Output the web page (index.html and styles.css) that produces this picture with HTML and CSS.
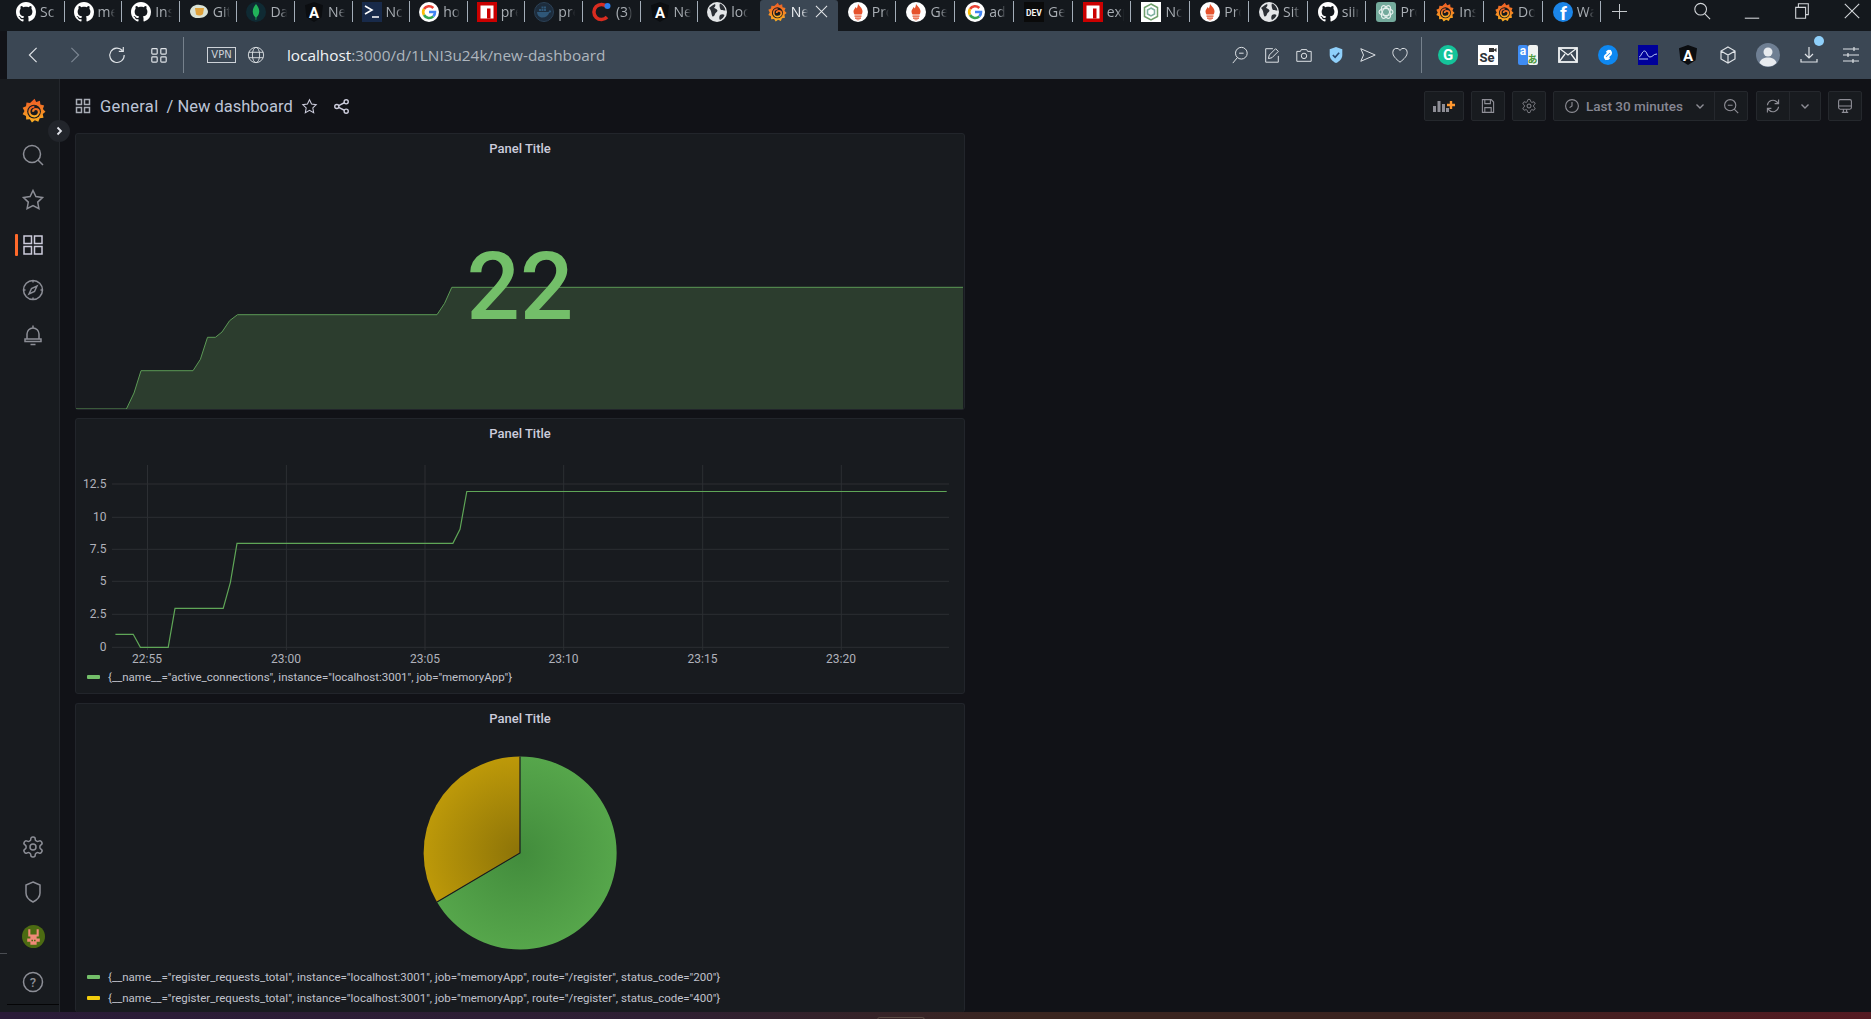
FILE: index.html
```html
<!DOCTYPE html>
<html lang="en">
<head>
  <meta charset="UTF-8" />
  <meta name="viewport" content="width=device-width, initial-scale=1.0"/>
  <title>New dashboard - Grafana</title>
  <link rel="stylesheet" href="styles.css">
</head>
<body>

  <!-- shared favicons -->
  <svg class="defs" width="0" height="0">
    <defs>
      <linearGradient id="grafGrad" x1="0" y1="1" x2="0" y2="0">
        <stop offset="0" stop-color="#fbb022"/>
        <stop offset="1" stop-color="#ee5a26"/>
      </linearGradient>
      <radialGradient id="pieGreen" gradientUnits="userSpaceOnUse" cx="520" cy="853" r="96.5">
        <stop offset="0" stop-color="#428c3c"/>
        <stop offset="1" stop-color="#56a64b"/>
      </radialGradient>
      <radialGradient id="pieYellow" gradientUnits="userSpaceOnUse" cx="520" cy="853" r="96.5">
        <stop offset="0" stop-color="#8c7308"/>
        <stop offset="1" stop-color="#bd9909"/>
      </radialGradient>
    </defs>
    <symbol id="gh" viewBox="0 0 16 16">
      <path fill="#fff" d="M8 0C3.58 0 0 3.58 0 8c0 3.54 2.29 6.53 5.47 7.59.4.07.55-.17.55-.38 0-.19-.01-.82-.01-1.49-2.01.37-2.53-.49-2.69-.94-.09-.23-.48-.94-.82-1.13-.28-.15-.68-.52-.01-.53.63-.01 1.08.58 1.23.82.72 1.21 1.87.87 2.33.66.07-.52.28-.87.51-1.07-1.78-.2-3.64-.89-3.64-3.95 0-.87.31-1.59.82-2.15-.08-.2-.36-1.02.08-2.12 0 0 .67-.21 2.2.82.64-.18 1.32-.27 2-.27.68 0 1.36.09 2 .27 1.53-1.04 2.2-.82 2.2-.82.44 1.1.16 1.92.08 2.12.51.56.82 1.27.82 2.15 0 3.07-1.87 3.75-3.65 3.95.29.25.54.73.54 1.48 0 1.07-.01 1.93-.01 2.2 0 .21.15.46.55.38A8.013 8.013 0 0016 8c0-4.42-3.58-8-8-8z"/>
    </symbol>
    <symbol id="graf" viewBox="0 0 24 24">
      <path fill="url(#grafGrad)" d="M13 .8l1.6 3 3.6-1.2.4 3.7 3.6 1-1.2 3.3 2.5 2.5-2.6 2.3.7 3.5-3.6.5-1.4 3.4-3.3-1.5-2.8 2.2-2-3-3.5.2-.2-3.5-3.2-1.7 1.7-3-1.7-3.2 3.2-1.4.5-3.5 3.4.4z"/>
      <circle cx="12.5" cy="13" r="6.6" fill="#181b1f"/>
      <path fill="none" stroke="url(#grafGrad)" stroke-width="2" d="M12.8 8.4a4.6 4.6 0 1 0 4.4 5.2c0-2-1.5-3-3-3a2.6 2.6 0 0 0-2.6 2.6"/>
    </symbol>
    <symbol id="shield" viewBox="0 0 20 20">
      <path fill="#0b0d10" d="M10 0l9 3.2-1.4 12L10 20l-7.6-4.800L1 3.200z"/>
    </symbol>
    <symbol id="google" viewBox="0 0 20 20">
      <circle cx="10" cy="10" r="10" fill="#fff"/>
      <path fill="none" stroke="#ea4335" stroke-width="2.600" d="M14.300 6A6 6 0 0 0 5 7"/>
      <path fill="none" stroke="#fbbc05" stroke-width="2.600" d="M5 7a6 6 0 0 0 0 6"/>
      <path fill="none" stroke="#34a853" stroke-width="2.600" d="M5 13a6 6 0 0 0 9.300 1.400"/>
      <path fill="none" stroke="#4285f4" stroke-width="2.600" d="M14.300 14.400A6 6 0 0 0 16 10H10"/>
    </symbol>
    <symbol id="npm" viewBox="0 0 20 20">
      <rect width="20" height="20" fill="#cb0000"/>
      <rect x="3.500" y="3.500" width="13" height="13" fill="#fff"/>
      <rect x="10" y="6.500" width="3.500" height="10" fill="#cb0000"/>
    </symbol>
    <symbol id="prom" viewBox="0 0 20 20">
      <circle cx="10" cy="10" r="10" fill="#fff"/>
      <path fill="#e6522c" d="M10 1.500c.6 2.500 4.500 4 4.500 8 0 1.200-.5 2.200-1 3h-7c-.5-.8-1-1.800-1-3 0-2 1.500-2.500 2-4.500.8.500 1 1 1.200 1.600.8-1.200 1.300-3.300 1.300-5.100z"/>
      <path fill="#e6522c" d="M6.500 13.400h7v1.400h-7zM7 15.500h6v1.300H7zM8 17.400h4c-.4 1-3.600 1-4 0z"/>
    </symbol>
    <symbol id="globe" viewBox="0 0 20 20">
      <circle cx="10" cy="10" r="10" fill="#e4e6e8"/>
      <path fill="#2a2e34" d="M2 6c2-1 3-3 6-4 1 1 0 3-1 3.500.5 1.500 3 1 3.500 3 0 2-2 1.500-2.500 3.500-.3 1.500-1.500 3-2.500 2.500C4 12 5 9 2 6zM13 1.500c3 1 5 4 5.500 7-1.500.5-3-1-4.500-.5-1-1-2-5-1-6.500zM13 13c1.500-1 3.500-1 4.500 0-.5 2-2.500 4-4.500 5-1-1-1-3.500 0-5z"/>
    </symbol>
    <symbol id="docker" viewBox="0 0 20 20">
      <circle cx="10" cy="10" r="9.500" fill="#1d2c3c" stroke="#2a4056"/>
      <path fill="#2f5778" d="M3 10h11c1 0 1.500-1 1.500-2 1 .3 1.500 1 1.700 1.800-.5.700-1.200 1-2 1-1 3-3.500 4.700-6.700 4.700-3.500 0-5.300-2.500-5.500-5.500z"/>
      <path fill="#2f5778" d="M5 7h2v2H5zM7.500 7h2v2h-2zM10 7h2v2h-2zM7.500 4.500h2v2h-2zM10 4.500h2v2h-2z"/>
    </symbol>
    <symbol id="nc" viewBox="0 0 20 20">
      <rect width="20" height="20" fill="#fff"/>
      <path fill="none" stroke="#6f9f6a" stroke-width="1.500" d="M10 2l6.500 3.500v9L10 18l-6.500-3.500v-9z"/>
      <path fill="none" stroke="#7fb0a0" stroke-width="1.500" d="M10 6l3.500 2v4L10 14l-3.500-2V8z"/>
    </symbol>
    <symbol id="openai" viewBox="0 0 20 20">
      <rect width="20" height="20" rx="3" fill="#74aa9c"/>
      <g fill="none" stroke="#e6f0ed" stroke-width="1.100">
        <ellipse cx="10" cy="10" rx="7" ry="3.500"/>
        <ellipse cx="10" cy="10" rx="7" ry="3.500" transform="rotate(60 10 10)"/>
        <ellipse cx="10" cy="10" rx="7" ry="3.500" transform="rotate(120 10 10)"/>
      </g>
    </symbol>
    <symbol id="gemoji" viewBox="0 0 20 20">
      <path fill="#d9e2d6" d="M1 9c1-5 6-7 10-6 4 0 8 3 8 7-1 5-6 6-10 6-4 .5-8-2-8-7z"/>
      <path fill="#e0a23c" d="M6 6h9l-1 6c-2 2-5 2-7 .500z"/>
    </symbol>
    <symbol id="mongo" viewBox="0 0 20 20">
      <circle cx="10" cy="10" r="10" fill="#0f2a33"/>
      <path fill="#21b35a" d="M10 2c2 2.500 3.500 5 3.200 8-.3 3-1.800 4.500-2.700 5.300l-.3 2.700h-.5l-.2-2.700C8.500 14.500 7 13 6.800 10 6.500 7 8 4.500 10 2z"/>
    </symbol>
  </svg>

  <div class="tabstrip">
    <div class="tab"><svg class="fav"><use href="#gh"/></svg><span class="tab-text">Sc</span></div>
    <div class="tab"><svg class="fav"><use href="#gh"/></svg><span class="tab-text">me</span></div>
    <div class="tab"><svg class="fav"><use href="#gh"/></svg><span class="tab-text">Ins</span></div>
    <div class="tab"><svg class="fav"><use href="#gemoji"/></svg><span class="tab-text">Git</span></div>
    <div class="tab"><svg class="fav"><use href="#mongo"/></svg><span class="tab-text">Da</span></div>
    <div class="tab">
      <svg class="fav" viewBox="0 0 20 20"><use href="#shield"/><text x="10" y="15.500" class="fav-a">A</text></svg>
      <span class="tab-text">Ne</span>
    </div>
    <div class="tab">
      <svg class="fav" viewBox="0 0 20 20"><rect width="20" height="20" fill="#182a4a"/><path d="M3 4l7 4-7 4M10 15h7" fill="none" stroke="#fff" stroke-width="1.600"/></svg>
      <span class="tab-text">Nc</span>
    </div>
    <div class="tab"><svg class="fav"><use href="#google"/></svg><span class="tab-text">ho</span></div>
    <div class="tab"><svg class="fav"><use href="#npm"/></svg><span class="tab-text">pre</span></div>
    <div class="tab"><svg class="fav"><use href="#docker"/></svg><span class="tab-text">pre</span></div>
    <div class="tab">
      <svg class="fav" viewBox="0 0 20 20"><path d="M15 5a7.500 7.500 0 1 0 0 10" fill="none" stroke="#d92c20" stroke-width="3.500"/><circle cx="15.500" cy="4" r="3" fill="#2b7de9"/></svg>
      <span class="tab-text">(3)</span>
    </div>
    <div class="tab">
      <svg class="fav" viewBox="0 0 20 20"><use href="#shield"/><text x="10" y="15.500" class="fav-a">A</text></svg>
      <span class="tab-text">Ne</span>
    </div>
    <div class="tab tab-plain"><svg class="fav"><use href="#globe"/></svg><span class="tab-text">loc</span></div>
    <div class="tab-active">
      <svg class="fav"><use href="#graf"/></svg>
      <span class="tab-text tab-text-on">Ne</span>
      <svg class="tab-close ico" viewBox="0 0 14 14"><path d="M1 1l12 12M13 1L1 13"/></svg>
    </div>
    <div class="tab tab-wide"><svg class="fav"><use href="#prom"/></svg><span class="tab-text">Pro</span></div>
    <div class="tab tab-wide"><svg class="fav"><use href="#prom"/></svg><span class="tab-text">Ge</span></div>
    <div class="tab tab-wide"><svg class="fav"><use href="#google"/></svg><span class="tab-text">ad</span></div>
    <div class="tab tab-wide">
      <svg class="fav" viewBox="0 0 20 20"><rect width="20" height="20" fill="#0a0a0a"/><text x="10" y="13.500" class="fav-dev">DEV</text></svg>
      <span class="tab-text">Ge</span>
    </div>
    <div class="tab tab-wide"><svg class="fav"><use href="#npm"/></svg><span class="tab-text">exp</span></div>
    <div class="tab tab-wide"><svg class="fav"><use href="#nc"/></svg><span class="tab-text">Nc</span></div>
    <div class="tab tab-wide"><svg class="fav"><use href="#prom"/></svg><span class="tab-text">Pro</span></div>
    <div class="tab tab-wide"><svg class="fav"><use href="#globe"/></svg><span class="tab-text">Sit</span></div>
    <div class="tab tab-wide"><svg class="fav"><use href="#gh"/></svg><span class="tab-text">siir</span></div>
    <div class="tab tab-wide"><svg class="fav"><use href="#openai"/></svg><span class="tab-text">Pro</span></div>
    <div class="tab tab-wide"><svg class="fav"><use href="#graf"/></svg><span class="tab-text">Ins</span></div>
    <div class="tab tab-wide"><svg class="fav"><use href="#graf"/></svg><span class="tab-text">Do</span></div>
    <div class="tab tab-wide">
      <svg class="fav" viewBox="0 0 20 20"><circle cx="10" cy="10" r="10" fill="#1b85e8"/><text x="10.500" y="18" class="fav-f">f</text></svg>
      <span class="tab-text">Wa</span>
    </div>
    <svg class="tab-plus ico" viewBox="0 0 16 16"><path d="M8 0v16M0 8h16"/></svg>
    <div class="win-btns">
      <div class="win-btn"><svg class="ico" viewBox="0 0 20 20"><circle cx="8.500" cy="8" r="6.500"/><path d="M13 13l6 6"/></svg></div>
      <div class="win-btn"><svg class="ico" viewBox="0 0 20 20"><path d="M2 18h16"/></svg></div>
      <div class="win-btn"><svg class="ico" viewBox="0 0 20 20"><path d="M3 6h11v12H3zM6 6V2h11v12h-3"/></svg></div>
      <div class="win-btn"><svg class="ico" viewBox="0 0 20 20"><path d="M2 2l16 16M18 2L2 18"/></svg></div>
    </div>
  </div>

  <div class="toolbar">
    <div class="tool"><svg class="ico" viewBox="0 0 20 20"><path d="M14 2l-8 8 8 8"/></svg></div>
    <div class="tool tool-off"><svg class="ico" viewBox="0 0 20 20"><path d="M6 2l8 8-8 8"/></svg></div>
    <div class="tool"><svg class="ico" viewBox="0 0 20 20"><path d="M16 5a8 8 0 1 0 2 5M17 1v5h-5"/></svg></div>
    <div class="tool"><svg class="ico" viewBox="0 0 20 20"><rect x="2" y="3" width="6" height="6" rx="1"/><rect x="12" y="3" width="6" height="6" rx="1"/><rect x="2" y="12" width="6" height="6" rx="1"/><rect x="12" y="12" width="6" height="6" rx="1"/></svg></div>
    <div class="tool-sep"></div>
    <div class="vpn">VPN</div>
    <svg class="url-globe ico" viewBox="0 0 20 20"><circle cx="10" cy="10" r="8.500"/><ellipse cx="10" cy="10" rx="4" ry="8.500"/><path d="M2 7h16M2 13h16"/></svg>
    <div class="url"><span class="url-host">localhost</span>:3000/d/1LNI3u24k/new-dashboard</div>
    <div class="tool-right">
      <div class="tool-sm"><svg class="ico" viewBox="0 0 20 20"><circle cx="11.500" cy="8" r="6.500"/><path d="M7 13l-5 6M9 8h5"/></svg></div>
      <div class="tool-sm"><svg class="ico" viewBox="0 0 20 20"><path d="M11 3H3v15h14v-7M6 14l1-4 7-7 3 3-7 7z"/></svg></div>
      <div class="tool-sm"><svg class="ico" viewBox="0 0 20 20"><path d="M2 6h4l1-2h6l1 2h4v11H2z"/><circle cx="10" cy="11" r="3"/></svg></div>
      <div class="tool-sm"><svg viewBox="0 0 20 20"><path fill="#8fd0fb" d="M10 1l7 2.500V10c0 4-3 7-7 9-4-2-7-5-7-9V3.500z"/><path d="M6.500 10l2.500 2.500 4.500-5" fill="none" stroke="#2b4a70" stroke-width="1.800"/></svg></div>
      <div class="tool-sm"><svg class="ico" viewBox="0 0 20 20"><path d="M2 3l16 7-16 7 3-7z"/></svg></div>
      <div class="tool-sm"><svg class="ico" viewBox="0 0 20 20"><path d="M10 18C5 14 2 11 2 7a4.200 4.200 0 0 1 8-2 4.200 4.200 0 0 1 8 2c0 4-3 7-8 11z"/></svg></div>
      <div class="tool-sep tool-sep-r"></div>
      <div class="ext">
        <svg viewBox="0 0 20 20"><circle cx="10" cy="10" r="10" fill="#15c39a"/><text x="10" y="15" class="ext-g">G</text></svg>
      </div>
      <div class="ext">
        <svg viewBox="0 0 20 20"><rect width="20" height="20" fill="#fff"/><text x="1.500" y="17" class="ext-se">Se</text><path d="M11 3h5v4h-5zM16 4.500l2.500-1.500v4L16 5.500z" fill="#333"/></svg>
      </div>
      <div class="ext">
        <svg viewBox="0 0 20 20"><rect width="10" height="20" rx="2" fill="#3f8cf3"/><rect x="10" width="10" height="20" rx="2" fill="#f1f3f1"/><text x="5" y="10" class="ext-a">a</text><text x="14.500" y="18" class="ext-jp">あ</text></svg>
      </div>
      <div class="ext">
        <svg viewBox="0 0 20 20"><rect x="1" y="3" width="18" height="14" fill="none" stroke="#f1f3f4" stroke-width="1.800"/><path d="M1 3l9 7 9-7M1 17l6-8M19 17l-6-8" fill="none" stroke="#f1f3f4" stroke-width="1.300"/></svg>
      </div>
      <div class="ext">
        <svg viewBox="0 0 20 20"><circle cx="10" cy="10" r="10" fill="#0e88f1"/><path d="M13 5.500L7.500 10.500a2 2 0 0 0 3 3l1-1M7 14.500L12.500 9.500a2 2 0 0 0-3-3l-1 1" fill="none" stroke="#fff" stroke-width="1.800"/></svg>
      </div>
      <div class="ext">
        <svg viewBox="0 0 20 20"><rect width="20" height="20" fill="#00009a"/><path d="M1 12c2 0 3-6 5.500-6S9 12 12 12s3-3 7-3M1 14h9" fill="none" stroke="#cfe0ff" stroke-width=".9"/></svg>
      </div>
      <div class="ext"><svg viewBox="0 0 20 20"><use href="#shield"/><text x="10" y="15.500" class="fav-a">A</text></svg></div>
      <div class="ext">
        <svg class="ico" viewBox="0 0 20 20"><path d="M10 2l7 4v8l-7 4-7-4V6zM3 6l7 4 7-4M10 10v8"/></svg>
      </div>
      <div class="ext ext-user">
        <svg viewBox="0 0 24 24"><circle cx="12" cy="12" r="12" fill="#6f7f93"/><circle cx="12" cy="9" r="4.500" fill="#e8ebef"/><path d="M3.500 20c1-4 4.500-5.500 8.500-5.500s7.500 1.500 8.500 5.500a12 12 0 0 1-17 0z" fill="#e8ebef"/></svg>
      </div>
      <div class="ext ext-dl">
        <svg class="ico" viewBox="0 0 20 20"><path d="M10 2v11M6 9l4 4 4-4M2 14v3h16v-3"/></svg>
        <span class="ext-dot"></span>
      </div>
      <div class="ext">
        <svg class="ico" viewBox="0 0 20 20"><path d="M2 4h16M2 10h16M2 16h16M13 2v4M7 8v4M12 14v4"/></svg>
      </div>
    </div>
  </div>

  <div class="page">
    <nav class="sidebar">
      <div class="nav-item"><svg class="logo"><use href="#graf"/></svg></div>
      <div class="nav-item"><svg class="ico" viewBox="0 0 24 24"><circle cx="11" cy="11" r="8.500"/><path d="M17 17l5 5"/></svg></div>
      <div class="nav-item"><svg class="ico" viewBox="0 0 24 24"><path d="M12 2.500l2.900 6.100 6.600.9-4.800 4.600 1.200 6.600-5.900-3.200-5.900 3.200 1.200-6.600L2.500 9.500l6.600-.9z"/></svg></div>
      <div class="nav-item nav-on"><svg class="ico" viewBox="0 0 24 24"><path d="M3 3h7.500v7.500H3zM13.500 3H21v7.500h-7.500zM3 13.500h7.500V21H3zM13.500 13.500H21V21h-7.500z"/></svg></div>
      <div class="nav-item"><svg class="ico" viewBox="0 0 24 24"><circle cx="12" cy="12" r="9.500"/><path d="M16 8l-2.500 5.500L8 16l2.500-5.500zM12 2.500v2M12 19.500v2M2.500 12h2M19.500 12h2"/></svg></div>
      <div class="nav-item"><svg class="ico" viewBox="0 0 24 24"><path d="M12 2.500v2M6 16v-5a6 6 0 0 1 12 0v5M4 16h16v2.500H4zM9.500 21.500h5"/></svg></div>
      <div class="nav-bottom">
        <div class="nav-item"><svg class="ico" viewBox="0 0 24 24"><path d="M12.220 2h-.44a2 2 0 0 0-2 2v.18a2 2 0 0 1-1 1.730l-.43.25a2 2 0 0 1-2 0l-.15-.08a2 2 0 0 0-2.730.73l-.22.38a2 2 0 0 0 .73 2.730l.15.1a2 2 0 0 1 1 1.720v.51a2 2 0 0 1-1 1.740l-.15.09a2 2 0 0 0-.73 2.730l.22.38a2 2 0 0 0 2.730.73l.15-.08a2 2 0 0 1 2 0l.43.25a2 2 0 0 1 1 1.730V20a2 2 0 0 0 2 2h.44a2 2 0 0 0 2-2v-.18a2 2 0 0 1 1-1.730l.43-.25a2 2 0 0 1 2 0l.15.08a2 2 0 0 0 2.730-.73l.22-.39a2 2 0 0 0-.73-2.730l-.15-.08a2 2 0 0 1-1-1.740v-.5a2 2 0 0 1 1-1.740l.15-.09a2 2 0 0 0 .73-2.730l-.22-.38a2 2 0 0 0-2.730-.73l-.15.08a2 2 0 0 1-2 0l-.43-.25a2 2 0 0 1-1-1.730V4a2 2 0 0 0-2-2z"/><circle cx="12" cy="12" r="3"/></svg></div>
        <div class="nav-item"><svg class="ico" viewBox="0 0 24 24"><path d="M12 2l7 3v8c0 4-3 7-7 9-4-2-7-5-7-9V5z"/></svg></div>
        <div class="nav-item">
          <svg class="avatar" viewBox="0 0 22 22">
            <circle cx="11" cy="11" r="11" fill="#4c6b12"/>
            <path d="M6 4h2v5h6V4h2v7h-2v2h3v3h-3v3H8v-3H5v-3h3v-2H6z" fill="#f08a78"/>
            <path d="M9 14h1.500v1.500H9zM11.500 14H13v1.500h-1.500zM10 6h2v1.500h-2z" fill="#4c6b12"/>
          </svg>
        </div>
        <div class="nav-item"><svg class="ico" viewBox="0 0 24 24"><circle cx="12" cy="12" r="9.500"/><text x="12" y="16.500" class="nav-q">?</text></svg></div>
      </div>
    </nav>
    <div class="nav-toggle"><svg class="ico" viewBox="0 0 10 10"><path d="M3.500 1.500L7 5 3.500 8.500"/></svg></div>

    <main class="content">
      <header class="dash-head">
        <svg class="ico crumb-icon" viewBox="0 0 16 16"><path d="M1.500 1.500h5v5h-5zM9.500 1.500h5v5h-5zM1.500 9.500h5v5h-5zM9.500 9.500h5v5h-5z"/></svg>
        <span class="crumb crumb-root">General</span>
        <span class="crumb crumb-sub">/ New dashboard</span>
        <svg class="ico crumb-star" viewBox="0 0 24 24"><path d="M12 2.500l2.900 6.100 6.600.9-4.800 4.600 1.200 6.600-5.900-3.200-5.900 3.200 1.200-6.600L2.500 9.500l6.600-.9z"/></svg>
        <svg class="ico crumb-share" viewBox="0 0 16 16"><circle cx="3" cy="8" r="2.200"/><circle cx="13" cy="3" r="2.200"/><circle cx="13" cy="13" r="2.200"/><path d="M5 7l6-3M5 9l6 3"/></svg>

        <div class="dash-actions">
          <div class="btn btn-add">
            <svg viewBox="0 0 22 12"><path d="M0 6h3v6H0zM4.500 1h3v11h-3zM9 4h3v8H9zM13 8h3v4h-3z" fill="#8e8e96"/><path d="M18 1v8M14 5h8" stroke="#ff9830" stroke-width="2.400"/></svg>
          </div>
          <div class="btn btn-icon"><svg class="ico" viewBox="0 0 20 20"><path d="M3 2h11l3 3v13H3zM6 2v5h7V2M6 18v-6h8v6"/></svg></div>
          <div class="btn btn-icon"><svg class="ico" viewBox="0 0 24 24"><path d="M12.220 2h-.44a2 2 0 0 0-2 2v.18a2 2 0 0 1-1 1.730l-.43.25a2 2 0 0 1-2 0l-.15-.08a2 2 0 0 0-2.730.73l-.22.38a2 2 0 0 0 .73 2.730l.15.1a2 2 0 0 1 1 1.720v.51a2 2 0 0 1-1 1.740l-.15.09a2 2 0 0 0-.73 2.730l.22.38a2 2 0 0 0 2.730.73l.15-.08a2 2 0 0 1 2 0l.43.25a2 2 0 0 1 1 1.730V20a2 2 0 0 0 2 2h.44a2 2 0 0 0 2-2v-.18a2 2 0 0 1 1-1.730l.43-.25a2 2 0 0 1 2 0l.15.08a2 2 0 0 0 2.730-.73l.22-.39a2 2 0 0 0-.73-2.730l-.15-.08a2 2 0 0 1-1-1.740v-.5a2 2 0 0 1 1-1.740l.15-.09a2 2 0 0 0 .73-2.730l-.22-.38a2 2 0 0 0-2.730-.73l-.15.08a2 2 0 0 1-2 0l-.43-.25a2 2 0 0 1-1-1.730V4a2 2 0 0 0-2-2z"/><circle cx="12" cy="12" r="3"/></svg></div>
          <div class="btn btn-group btn-time">
            <div class="time-main">
              <svg class="ico" viewBox="0 0 20 20"><circle cx="10" cy="10" r="8"/><path d="M10 5v5l-3 2"/></svg>
              <span class="time-text">Last 30 minutes</span>
              <svg class="ico chev" viewBox="0 0 10 10"><path d="M1.500 3.500L5 7l3.500-3.500"/></svg>
            </div>
            <div class="btn-part"><svg class="ico" viewBox="0 0 20 20"><circle cx="9" cy="9" r="7"/><path d="M14 14l5 5M6 9h6"/></svg></div>
          </div>
          <div class="btn btn-group btn-refresh">
            <div class="btn-part btn-sync"><svg class="ico" viewBox="0 0 20 20"><path d="M3 9a7 7 0 0 1 12-4l2 2M17 2v5h-5M17 11a7 7 0 0 1-12 4l-2-2M3 18v-5h5"/></svg></div>
            <div class="btn-part btn-more"><svg class="ico chev" viewBox="0 0 10 10"><path d="M1.500 3.500L5 7l3.500-3.500"/></svg></div>
          </div>
          <div class="btn btn-icon"><svg class="ico" viewBox="0 0 20 20"><rect x="2" y="2" width="16" height="12" rx="2"/><path d="M2 10h16M6 18h8M8 14v4M12 14v4"/></svg></div>
        </div>
      </header>

      <section class="panel panel-stat">
        <div class="panel-title">Panel Title</div>
        <svg class="chart chart-stat" viewBox="76 162 888 247">
          <path class="spark-fill" d="M76 409H126.400L134 393L141 370.700H193L200.400 359.300L207.500 337.300H215.400L222 332L229.600 320.700L237.500 314.700H437L444.600 303.300L451.800 287.300H963V409Z"/>
          <path class="spark-line" d="M76 409H126.400L134 393L141 370.700H193L200.400 359.300L207.500 337.300H215.400L222 332L229.600 320.700L237.500 314.700H437L444.600 303.300L451.800 287.300H963"/>
        </svg>
        <div class="stat-value">22</div>
      </section>

      <section class="panel">
        <div class="panel-title">Panel Title</div>
        <svg class="chart chart-graph" viewBox="76 447 888 219">
          <g class="grid">
            <path d="M147.500 465V650M286.400 465V650M425 465V650M563.700 465V650M702.700 465V650M841.300 465V650"/>
            <path d="M112 484H949M112 517.300H949M112 549.300H949M112 581.300H949M112 614.300H949M112 647.300H949"/>
          </g>
          <g class="axis-y">
            <text x="106.500" y="488">12.5</text>
            <text x="106.500" y="521">10</text>
            <text x="106.500" y="553">7.5</text>
            <text x="106.500" y="585">5</text>
            <text x="106.500" y="618">2.5</text>
            <text x="106.500" y="651">0</text>
          </g>
          <g class="axis-x">
            <text x="147" y="663">22:55</text>
            <text x="286" y="663">23:00</text>
            <text x="425" y="663">23:05</text>
            <text x="563.500" y="663">23:10</text>
            <text x="702.500" y="663">23:15</text>
            <text x="841" y="663">23:20</text>
          </g>
          <path class="graph-line" d="M115.400 634.300H133.200L140.400 647.300H168.200L175 608.300H223.200L230.400 582.300L237 543.300H452.900L460 529.300L466.800 491.500H946.700"/>
        </svg>
        <div class="legend">
          <div class="legend-row"><span class="swatch"></span>{__name__="active_connections", instance="localhost:3001", job="memoryApp"}</div>
        </div>
      </section>

      <section class="panel">
        <div class="panel-title">Panel Title</div>
        <svg class="chart chart-pie" viewBox="76 732 888 234">
          <path fill="url(#pieGreen)" d="M520 853L437 902A96.500 96.500 0 1 0 520 756.500Z"/>
          <path fill="url(#pieYellow)" d="M520 853V756.500A96.500 96.500 0 0 0 437 902Z"/>
          <path class="pie-gap" d="M520 756.500V853L437 902"/>
        </svg>
        <div class="legend">
          <div class="legend-row legend-row-pie"><span class="swatch"></span>{__name__="register_requests_total", instance="localhost:3001", job="memoryApp", route="/register", status_code="200"}</div>
          <div class="legend-row legend-row-pie"><span class="swatch swatch-yellow"></span>{__name__="register_requests_total", instance="localhost:3001", job="memoryApp", route="/register", status_code="400"}</div>
        </div>
      </section>
    </main>
  </div>

  <div class="bottom-strip"><span class="strip-tab"></span></div>

</body>
</html>
```

FILE: styles.css
```css
* {
  box-sizing: border-box;
}
html, body {
  height: 100%;
}
body {
  margin: 0;
  height: 1019px;
  overflow: hidden;
  display: flex;
  flex-direction: column;
  background: #111217;
  color: #ccccdc;
  font-family: Roboto, "Liberation Sans", sans-serif;
}
svg {
  display: block;
}
.defs {
  position: absolute;
}
.ico {
  fill: none;
  stroke: currentColor;
  stroke-width: 1.5;
}

/* browser tabs */
.tabstrip {
  flex: 0 0 31px;
  display: flex;
  align-items: flex-start;
  padding-left: 7px;
  background: #14181d;
}
.tab {
  flex: 0 0 57.6px;
  height: 21px;
  margin-top: 1px;
  padding-left: 9px;
  display: flex;
  align-items: center;
  gap: 4px;
  border-right: 1px solid #a3adb8;
}
.tab-wide {
  flex-basis: 58.75px;
  padding-left: 10px;
}
.tab-plain {
  border-right: none;
}
.tab-active {
  flex: 0 0 78px;
  height: 31px;
  margin-left: 4px;
  padding: 1px 0 9px 7px;
  display: flex;
  align-items: center;
  gap: 4px;
  background: #3b4754;
  border-radius: 3px 3px 0 0;
}
.fav {
  flex: none;
  width: 20px;
  height: 20px;
}
.tab-text {
  width: 17px;
  white-space: nowrap;
  font-family: "Open Sans", "Noto Sans", sans-serif;
  font-size: 14px;
  color: #a9aeb4;
  -webkit-mask-image: linear-gradient(to right, #000 60%, transparent);
  mask-image: linear-gradient(to right, #000 60%, transparent);
}
.tab-text-on {
  color: #eef1f4;
}
.tab-close {
  flex: none;
  width: 13px;
  height: 13px;
  margin-left: 3px;
  color: #e3e6e9;
  stroke-width: 1.1;
}
.tab-plus {
  flex: none;
  width: 15px;
  height: 15px;
  margin: 4px 0 0 11px;
  color: #cfd3d8;
  stroke-width: 1;
}
.win-btns {
  margin-left: auto;
  display: flex;
  gap: 12px;
}
.win-btn {
  width: 38px;
  height: 22px;
  display: flex;
  align-items: center;
  justify-content: center;
  color: #d3d6da;
}
.win-btn svg {
  width: 18px;
  height: 18px;
  stroke-width: 1.2;
}

/* browser toolbar */
.toolbar {
  flex: 0 0 48px;
  margin-left: 7px;
  padding-left: 5px;
  display: flex;
  align-items: center;
  background: #3b4754;
  color: #dfe3e7;
}
.tool {
  width: 42px;
  display: flex;
  justify-content: center;
}
.tool svg {
  width: 18px;
  height: 18px;
  stroke-width: 1.3;
}
.tool-off {
  color: #7b8692;
}
.tool-sep {
  width: 1px;
  height: 36px;
  margin-left: 3px;
  background: #76818c;
}
.vpn {
  width: 29px;
  height: 16px;
  margin-left: 23px;
  border: 1px solid #cdd2d8;
  font-family: "DejaVu Sans", sans-serif;
  font-size: 10px;
  line-height: 14px;
  text-align: center;
  color: #cdd2d8;
}
.url-globe {
  width: 18px;
  height: 18px;
  margin-left: 11px;
  stroke-width: 1;
}
.url {
  margin-left: 22px;
  font-family: "Open Sans", "Noto Sans", sans-serif;
  font-size: 15.35px;
  color: #aeb6be;
}
.url-host {
  color: #f2f4f6;
}
.tool-right {
  margin-left: auto;
  display: flex;
  align-items: center;
}
.tool-sm {
  width: 32px;
  display: flex;
  justify-content: center;
}
.tool-sm svg {
  width: 18px;
  height: 18px;
  stroke-width: 1.1;
}
.tool-sep-r {
  margin: 0 6px 0 5px;
}
.ext {
  position: relative;
  width: 40px;
  display: flex;
  justify-content: center;
}
.ext svg {
  width: 20px;
  height: 20px;
}
.ext .ico {
  stroke-width: 1.2;
}
.ext-user {
  margin-right: 1px;
}
.ext-user svg {
  width: 24px;
  height: 24px;
}
.ext-dl {
  margin-right: 2px;
}
.ext-dot {
  position: absolute;
  top: -9px;
  left: 25px;
  width: 10px;
  height: 10px;
  border-radius: 50%;
  background: #8fd0fb;
}
.fav-a, .ext-g, .ext-se, .ext-a, .ext-jp, .fav-f, .fav-dev {
  font-family: Roboto, sans-serif;
  font-weight: 700;
  text-anchor: middle;
}
.fav-a {
  font-size: 15px;
  fill: #fff;
}
.fav-f {
  font-size: 19px;
  fill: #fff;
}
.fav-dev {
  font-size: 8.5px;
  fill: #f4f4f4;
}
.ext-g {
  font-size: 15px;
  fill: #fff;
}
.ext-se {
  font-size: 13px;
  fill: #2b3138;
  text-anchor: start;
}
.ext-a {
  font-size: 12px;
  fill: #fff;
}
.ext-jp {
  font-family: "Noto Sans CJK JP", sans-serif;
  font-size: 10px;
  fill: #4d9a3c;
}

/* grafana page */
.page {
  position: relative;
  flex: 1;
  min-height: 0;
  display: flex;
}
.sidebar {
  flex: 0 0 60px;
  padding: 8.5px 0 0 7px;
  display: flex;
  flex-direction: column;
  background: #181b1f;
  border-right: 1px solid #24272c;
}
.sidebar::after {
  content: "";
  position: absolute;
  left: 0;
  top: 874px;
  width: 7px;
  height: 1px;
  background: #4a4d52;
}
.nav-item {
  position: relative;
  height: 45px;
  display: flex;
  align-items: center;
  justify-content: center;
  color: #8c8e96;
}
.nav-item svg {
  width: 24px;
  height: 24px;
}
.nav-item svg.logo {
  width: 25px;
  height: 25px;
}
.nav-item svg.avatar {
  width: 23px;
  height: 23px;
}
.nav-on {
  color: #ccccdc;
}
.nav-on::before {
  content: "";
  position: absolute;
  left: 8px;
  top: 11px;
  width: 3px;
  height: 22px;
  border-radius: 1px;
  background: #ff6a2b;
}
.nav-q {
  font-family: Roboto, sans-serif;
  font-size: 13px;
  font-weight: 500;
  text-anchor: middle;
  fill: currentColor;
  stroke: none;
}
.nav-bottom {
  margin: auto 0 7px;
  border-bottom: 1px solid #050506;
}
.nav-toggle {
  position: absolute;
  left: 48px;
  top: 41px;
  width: 22px;
  height: 22px;
  border-radius: 50%;
  display: flex;
  align-items: center;
  justify-content: center;
  background: #22252b;
  color: #e0e2e8;
}
.nav-toggle svg {
  width: 10px;
  height: 10px;
  stroke-width: 1.8;
}

.content {
  flex: 1;
  min-width: 0;
  padding-left: 15px;
}
.dash-head {
  height: 54px;
  padding: 12px 9px 12px 0;
  display: flex;
  align-items: center;
}
.crumb-icon {
  width: 16px;
  height: 16px;
  color: #a9adb6;
}
.crumb {
  margin-left: 9px;
  font-size: 16.5px;
  color: #bcc4d6;
}
.crumb-root {
  letter-spacing: .35px;
}
.crumb-sub {
  margin-left: 8px;
}
.crumb-star {
  width: 17px;
  height: 17px;
  margin-left: 8px;
  color: #ccccdc;
}
.crumb-share {
  width: 15px;
  height: 15px;
  margin-left: 16px;
  color: #ccccdc;
}
.dash-actions {
  margin-left: auto;
  display: flex;
  gap: 7px;
}
.btn {
  height: 30px;
  display: flex;
  align-items: center;
  justify-content: center;
  background: #181b1f;
  border: 1px solid #25282d;
  border-radius: 2px;
  color: #8e8e96;
}
.btn-add {
  width: 40px;
}
.btn-add svg {
  width: 22px;
  height: 12px;
}
.btn-icon {
  width: 34px;
}
.btn svg.ico {
  flex: none;
  width: 16px;
  height: 16px;
  stroke-width: 1.4;
}
.btn-group {
  justify-content: flex-start;
}
.btn-time {
  width: 195px;
}
.time-main {
  width: 161px;
  height: 100%;
  padding-left: 10px;
  display: flex;
  align-items: center;
  border-right: 1px solid #25282d;
}
.time-text {
  margin-left: 6px;
  font-size: 13.5px;
  font-weight: 500;
  white-space: nowrap;
  color: #878793;
}
.btn svg.chev {
  width: 10px;
  height: 10px;
  margin-left: 12px;
}
.btn-part {
  flex: 1;
  height: 100%;
  display: flex;
  align-items: center;
  justify-content: center;
}
.btn-refresh {
  width: 65px;
  margin-left: 1px;
}
.btn-sync {
  flex: 0 0 33px;
  border-right: 1px solid #25282d;
}
.btn-more svg.chev {
  margin-left: 0;
}

/* panels */
.panel {
  position: relative;
  width: 890px;
  height: 276px;
  margin-bottom: 9px;
  background: #181b1f;
  border: 1px solid #22252b;
  border-radius: 3px;
}
.panel-stat {
  height: 277px;
  margin-bottom: 8px;
}
.panel:last-child {
  height: 309px;
  margin-bottom: 0;
  border-bottom: none;
}
.panel-title {
  height: 28px;
  font-size: 13px;
  font-weight: 500;
  line-height: 30px;
  text-align: center;
  color: #ccccdc;
}
.chart {
  width: 888px;
}
.chart-stat {
  height: 247px;
}
.chart-graph {
  height: 219px;
}
.chart-pie {
  height: 234px;
}
.stat-value {
  position: absolute;
  left: 0;
  right: 0;
  top: 98px;
  font-size: 94px;
  font-weight: 500;
  line-height: 110px;
  text-align: center;
  color: #73bf69;
}
.spark-fill {
  fill: #2c3d2e;
}
.spark-line {
  fill: none;
  stroke: #5c9a56;
  stroke-width: 1;
}
.grid path {
  fill: none;
  stroke: #2c2f33;
  stroke-width: 1;
}
.axis-y text, .axis-x text {
  font-size: 12px;
  fill: #b0b2bb;
}
.axis-y text {
  text-anchor: end;
}
.axis-x text {
  text-anchor: middle;
}
.graph-line {
  fill: none;
  stroke: #5fa657;
  stroke-width: 1.2;
}
.pie-gap {
  fill: none;
  stroke: #181b1f;
  stroke-width: 1.2;
}
.legend {
  padding-left: 11px;
}
.legend-row {
  height: 22px;
  display: flex;
  align-items: center;
  font-size: 11.5px;
  white-space: nowrap;
  color: #c0c2cc;
}
.legend-row-pie {
  height: 21px;
}
.swatch {
  flex: none;
  width: 13px;
  height: 4px;
  margin-right: 8px;
  border-radius: 1px;
  background: #73bf69;
}
.swatch-yellow {
  background: #f2cc0c;
}

.bottom-strip {
  flex: 0 0 7px;
  min-height: 0;
  overflow: hidden;
  padding-left: 877px;
  background: linear-gradient(to right, #2a1b38, #2e1f33 35%, #3b2620 55%, #3b2320 75%, #551a22);
}
.strip-tab {
  display: block;
  width: 48px;
  height: 7px;
  margin-top: 5px;
  border: 1px solid #5a4a44;
  border-bottom: none;
  border-radius: 3px 3px 0 0;
}
```
